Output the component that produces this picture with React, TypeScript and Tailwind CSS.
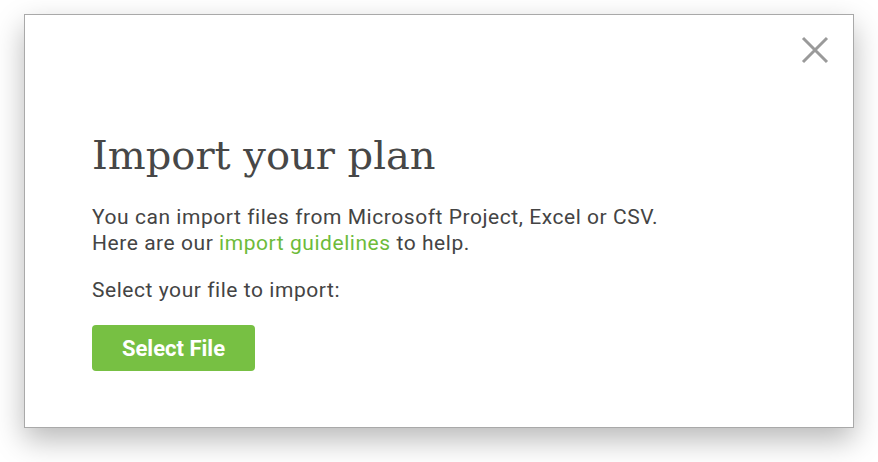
import * as React from 'react';

export default function App(): JSX.Element {
  return (
    <div className="h-[462px] w-[878px] bg-white pl-6 pt-[14px]">
      <div className="relative h-[414px] w-[830px] border border-[#a9a9a9] bg-white shadow-[0_12px_28px_rgba(0,0,0,0.28)]">
        <button
          type="button"
          aria-label="Close"
          className="absolute right-[22px] top-[19px] grid h-8 w-8 place-items-center text-[#9a9a9a]"
        >
          <svg viewBox="0 0 28 28" className="h-7 w-7" fill="none" stroke="currentColor" strokeWidth="3" strokeLinecap="butt">
            <path d="M2 2 L26 26 M26 2 L2 26" />
          </svg>
        </button>

        <div className="pl-[67px] pt-[118px] font-['Roboto',sans-serif] text-[#444]">
          <h1 className="font-['DejaVu_Serif',serif] text-[40px] leading-[44px] font-normal text-[#474747]">
            Import your plan
          </h1>
          <p className="mt-[27px] text-[21px] leading-[26px] tracking-[0.55px]">
            You can import files from Microsoft Project, Excel or CSV.
            <br />
            Here are our <a href="#" className="text-[#6dbb3a]">import guidelines</a> to help.
          </p>
          <p className="mt-[21px] text-[21px] leading-[26px] tracking-[0.55px]">Select your file to import:</p>
          <button
            type="button"
            className="mt-[22px] h-[46px] w-[163px] rounded-[4px] bg-[#77c043] text-[22px] font-bold text-white"
          >
            Select File
          </button>
        </div>
      </div>
    </div>
  );
}
